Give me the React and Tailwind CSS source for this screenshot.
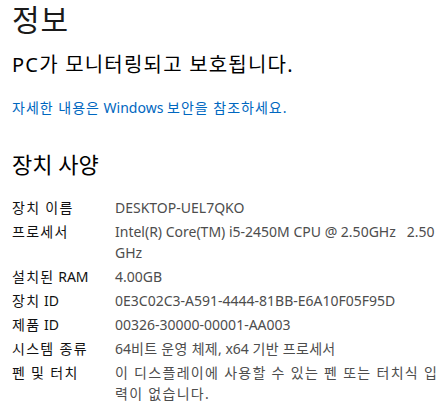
const K = ({ children, t = "tracking-[1.3px]" }) => <span className={t}>{children}</span>;

export default function App() {
  const rows = [
    [<K>장치 이름</K>, ["DESKTOP-UEL7QKO"]],
    [<K>프로세서</K>, ["Intel(R) Core(TM) i5-2450M CPU @ 2.50GHz   2.50", "GHz"]],
    [<><K>설치된</K> RAM</>, ["4.00GB"]],
    [<><K>장치</K> ID</>, ["0E3C02C3-A591-4444-81BB-E6A10F05F95D"]],
    [<><K>제품</K> ID</>, ["00326-30000-00001-AA003"]],
    [
      <K>시스템 종류</K>,
      [
        <>
          64<K t="tracking-[0.3px]">비트 운영 체제</K>, x64 <K t="tracking-[0.3px]">기반 프로세서</K>
        </>,
      ],
    ],
    [<K>펜 및 터치</K>, [<K>이 디스플레이에 사용할 수 있는 펜 또는 터치식 입</K>, <K>력이 없습니다.</K>]],
  ];
  return (
    <div
      className="w-[444px] h-[407px] bg-white overflow-hidden pl-[12px] pt-[2px]"
      style={{ fontFamily: '"Noto Sans", "Noto Sans CJK KR", sans-serif' }}
    >
      <h1 className="text-[30px] leading-[36px] tracking-[1px] text-[#1a1a1a] font-normal">정보</h1>
      <div className="mt-[13px] text-[20px] leading-[28px] tracking-[1.2px] text-black">PC가 모니터링되고 보호됩니다.</div>
      <div className="mt-[19px] text-[14px] leading-[20px] text-[#0067c0]">
        <K t="tracking-[1px]">자세한 내용은</K> Windows <K t="tracking-[1px]">보안을 참조하세요.</K>
      </div>
      <h2 className="mt-[31px] text-[22px] leading-[30px] text-black font-normal">장치 사양</h2>
      <div className="mt-[18px] flex flex-col gap-[3px] text-[14px] leading-[21px]">
        {rows.map(([label, lines], idx) => (
          <div key={idx} className="flex">
            <div className="w-[103px] shrink-0 text-[#111]">{label}</div>
            <div className="text-[#4d4d4d] whitespace-pre">
              {lines.map((l, i) => (
                <div key={i}>{l}</div>
              ))}
            </div>
          </div>
        ))}
      </div>
    </div>
  );
}
